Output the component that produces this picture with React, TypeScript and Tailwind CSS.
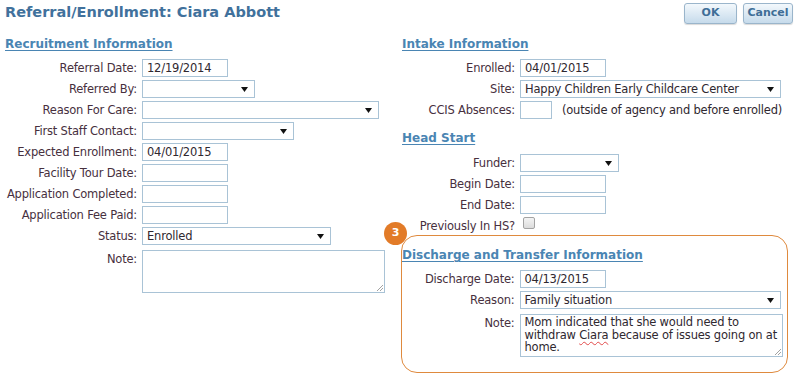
import React from "react";

const font = { fontFamily: '"DejaVu Sans", Verdana, sans-serif' };

function Arrow() {
  return (
    <svg width="7" height="5" viewBox="0 0 7 5" className="shrink-0">
      <polygon points="0,0 7,0 3.5,5" fill="#111" />
    </svg>
  );
}

function Input({ w, value }: { w: string; value?: string }) {
  return (
    <div
      className={`${w} h-[18px] border border-[#a9c3d6] bg-white pl-[4px] text-[11.5px] leading-[16px] tracking-[-0.2px] text-[#2f2830] whitespace-nowrap overflow-hidden`}
    >
      {value}
    </div>
  );
}

function Select({ w, value }: { w: string; value?: string }) {
  return (
    <div
      className={`${w} h-[18px] border border-[#a9c3d6] bg-white pl-[4px] pr-[6px] flex items-center justify-between text-[11.5px] leading-[16px] tracking-[-0.2px] text-[#2f2830] whitespace-nowrap`}
    >
      <span>{value}</span>
      <Arrow />
    </div>
  );
}

function Grip() {
  return (
    <svg width="7" height="7" viewBox="0 0 7 7" className="absolute right-[1px] bottom-[1px]">
      <line x1="1" y1="7" x2="7" y2="1" stroke="#8a8a8a" strokeWidth="0.8" />
      <line x1="4" y1="7" x2="7" y2="4" stroke="#8a8a8a" strokeWidth="0.8" />
    </svg>
  );
}

function Row({
  label,
  lw,
  children,
  top,
  className = "",
}: {
  label: string;
  lw: string;
  children: React.ReactNode;
  top?: boolean;
  className?: string;
}) {
  return (
    <div className={`flex ${top ? "items-start" : "items-center"} gap-[5px] ${className}`}>
      <div
        className={`${lw} shrink-0 text-right text-[11.5px] leading-[18px] tracking-[-0.2px] text-[#47303e] whitespace-nowrap`}
      >
        {label}
      </div>
      {children}
    </div>
  );
}

function H2({ children, className = "" }: { children: React.ReactNode; className?: string }) {
  return (
    <div
      className={`text-[12px] leading-[16px] font-bold text-[#4a85b3] underline underline-offset-[2px] decoration-[1px] whitespace-nowrap ${className}`}
    >
      {children}
    </div>
  );
}

function Btn({ children, w }: { children: React.ReactNode; w: string }) {
  return (
    <div
      className={`${w} h-[21px] rounded-[3px] border border-[#9ab5cb] bg-gradient-to-b from-[#f3f8fc] to-[#c6dbeb] shadow-[0_1px_1px_rgba(0,0,0,0.15)] flex items-center justify-center text-[11px] font-bold text-[#3f6e97]`}
    >
      {children}
    </div>
  );
}

export default function App() {
  return (
    <div className="w-[800px] h-[385px] bg-white overflow-hidden" style={font}>
      {/* header */}
      <div className="flex justify-between items-start pt-[3px] pl-[5px] pr-[7px]">
        <div className="text-[14.5px] leading-[18px] font-bold text-[#41719c] whitespace-nowrap">
          Referral/Enrollment: Ciara Abbott
        </div>
        <div className="flex gap-[6px]">
          <Btn w="w-[53px]">OK</Btn>
          <Btn w="w-[50px]">Cancel</Btn>
        </div>
      </div>

      <div className="flex">
        {/* left column */}
        <div className="w-[401px] shrink-0">
          <H2 className="mt-[12px] ml-[5px]">Recruitment Information</H2>
          <div className="mt-[7px] flex flex-col gap-[3px]">
            <Row label="Referral Date:" lw="w-[137px]">
              <Input w="w-[86px]" value="12/19/2014" />
            </Row>
            <Row label="Referred By:" lw="w-[137px]">
              <Select w="w-[113px]" />
            </Row>
            <Row label="Reason For Care:" lw="w-[137px]">
              <Select w="w-[237px]" />
            </Row>
            <Row label="First Staff Contact:" lw="w-[137px]">
              <Select w="w-[152px]" />
            </Row>
            <Row label="Expected Enrollment:" lw="w-[137px]">
              <Input w="w-[86px]" value="04/01/2015" />
            </Row>
            <Row label="Facility Tour Date:" lw="w-[137px]">
              <Input w="w-[86px]" />
            </Row>
            <Row label="Application Completed:" lw="w-[137px]">
              <Input w="w-[86px]" />
            </Row>
            <Row label="Application Fee Paid:" lw="w-[137px]">
              <Input w="w-[86px]" />
            </Row>
            <Row label="Status:" lw="w-[137px]">
              <Select w="w-[189px]" value="Enrolled" />
            </Row>
            <Row label="Note:" lw="w-[137px]" top className="mt-[2px]">
              <div className="relative w-[243px] h-[43px] border border-[#a9c3d6] bg-white">
                <Grip />
              </div>
            </Row>
          </div>
        </div>

        {/* right column */}
        <div className="w-[399px] shrink-0">
          <H2 className="mt-[12px] ml-[1px]">Intake Information</H2>
          <div className="mt-[7px] flex flex-col gap-[3px]">
            <Row label="Enrolled:" lw="w-[114px]">
              <Input w="w-[86px]" value="04/01/2015" />
            </Row>
            <Row label="Site:" lw="w-[114px]">
              <Select w="w-[261px]" value="Happy Children Early Childcare Center" />
            </Row>
            <Row label="CCIS Absences:" lw="w-[114px]">
              <Input w="w-[32px]" />
              <span className="ml-[5px] text-[11.5px] leading-[18px] tracking-[-0.2px] text-[#2f2830] whitespace-nowrap">
                (outside of agency and before enrolled)
              </span>
            </Row>
          </div>

          <H2 className="mt-[11px] ml-[1px]">Head Start</H2>
          <div className="mt-[8px] flex flex-col gap-[3px]">
            <Row label="Funder:" lw="w-[114px]">
              <Select w="w-[99px]" />
            </Row>
            <Row label="Begin Date:" lw="w-[114px]">
              <Input w="w-[86px]" />
            </Row>
            <Row label="End Date:" lw="w-[114px]">
              <Input w="w-[86px]" />
            </Row>
            <Row label="Previously In HS?" lw="w-[114px]" top>
              <div className="ml-[3px] w-[12px] h-[12px] rounded-[2px] border border-[#a3a3a3] bg-gradient-to-b from-[#f4f4f4] to-[#dcdcdc]" />
            </Row>
          </div>

          {/* discharge box */}
          <div className="relative w-[387px] h-[138px] rounded-[16px] border-[1.5px] border-[#df8a3e] pt-[11px]">
            <div className="absolute left-[-18px] top-[-14px] w-[23px] h-[23px] rounded-full bg-[#e27b28] flex items-center justify-center text-[11px] font-bold text-white">
              3
            </div>
            <H2>Discharge and Transfer Information</H2>
            <div className="mt-[7px] flex flex-col gap-[3px]">
              <Row label="Discharge Date:" lw="w-[112.5px]">
                <Input w="w-[86px]" value="04/13/2015" />
              </Row>
              <Row label="Reason:" lw="w-[112.5px]">
                <Select w="w-[261px]" value="Family situation" />
              </Row>
              <Row label="Note:" lw="w-[112.5px]" top className="mt-[2px]">
                <div className="relative w-[263px] h-[43px] border border-[#a9c3d6] bg-white pl-[4px] pt-[1px] text-[11.5px] leading-[12.7px] tracking-[-0.2px] text-[#2f2830] whitespace-nowrap">
                  Mom indicated that she would need to
                  <br />
                  withdraw{" "}
                  <span className="underline decoration-wavy decoration-[#e24a4a] decoration-[1px] underline-offset-[2px]">
                    Ciara
                  </span>{" "}
                  because of issues going on at
                  <br />
                  home.
                  <Grip />
                </div>
              </Row>
            </div>
          </div>
        </div>
      </div>
    </div>
  );
}
